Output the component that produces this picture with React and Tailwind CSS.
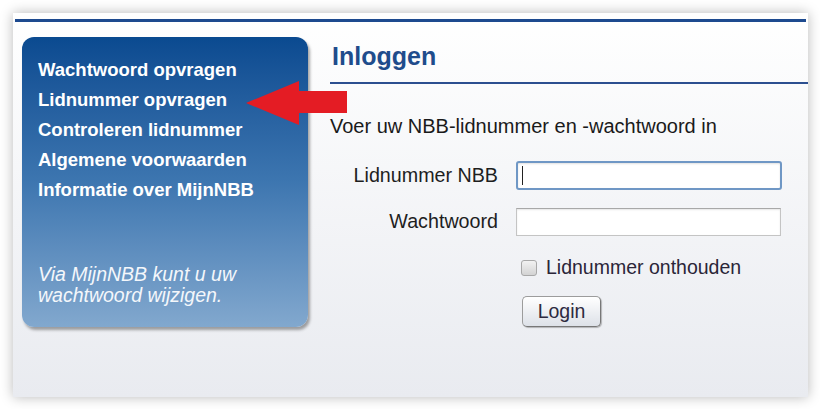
export default function App() {
  const font = { fontFamily: '"Liberation Sans", Arial, sans-serif' };
  return (
    <div className="relative w-[820px] h-[409px] bg-white overflow-hidden pt-[13px] pl-[13px]" style={font}>
      <div className="w-[795px] h-[384px] bg-gradient-to-b from-[#ffffff] to-[#e9ebf0] shadow-[0_0_12px_rgba(0,0,0,0.28)] flex flex-col">
        <div className="mt-[6px] mx-[2px] h-[3px] bg-[#1d4a8f]" />
        <div className="flex pt-[15px] pl-[9px]">
          <div className="w-[286px] h-[290px] rounded-[12px] bg-gradient-to-b from-[#0a4a90] via-[#3d76b0] to-[#82a8ce] shadow-[2px_3px_3px_rgba(0,0,0,0.35)] pt-[18px] pl-[16px] text-white">
            <ul className="font-bold text-[18.5px] leading-[30px]">
              <li>Wachtwoord opvragen</li>
              <li>Lidnummer opvragen</li>
              <li>Controleren lidnummer</li>
              <li>Algemene voorwaarden</li>
              <li>Informatie over MijnNBB</li>
            </ul>
            <p className="mt-[59px] italic text-[19.5px] leading-[21px] text-[#f4f7fb]">
              Via MijnNBB kunt u uw<br />wachtwoord wijzigen.
            </p>
          </div>
          <div className="flex-1 ml-[22px] pt-[4px]">
            <h1 className="text-[25px] leading-[30px] font-bold text-[#1f4c8c] pl-[2px] pb-[11px] border-b-2 border-[#2c4f90]">
              Inloggen
            </h1>
            <p className="mt-[30px] text-[20px] leading-[24px] text-[#1a1a1a]">
              Voer uw NBB-lidnummer en -wachtwoord in
            </p>
            <div className="mt-[23px] grid grid-cols-[168px_266px] gap-x-[18px] text-[19.7px] text-[#1e1e1e]">
              <div className="h-[29px] flex items-center justify-end">Lidnummer NBB</div>
              <div className="h-[29px] rounded-[3px] border-2 border-[#6f97c5] bg-white shadow-[inset_0_1px_2px_rgba(0,0,0,0.12)] flex items-center pl-[4px]">
                <span className="w-px h-[19px] bg-[#222]" />
              </div>
              <div className="mt-[18px] h-[28px] flex items-center justify-end">Wachtwoord</div>
              <div className="mt-[18px] h-[28px] w-[265px] border border-[#c4c4c4] border-t-[#a8a8a8] bg-white shadow-[inset_0_1px_2px_rgba(0,0,0,0.1)]" />
              <div />
              <div className="mt-[24px] h-[16px] flex items-center pl-[5px]">
                <span className="w-[16px] h-[16px] rounded-[3px] border border-[#a8a8a8] bg-gradient-to-b from-[#f2f2f2] to-[#d3d3d3]" />
                <span className="ml-[9px] text-[19.5px] text-[#2a2538]">Lidnummer onthouden</span>
              </div>
              <div />
              <div className="mt-[20px] pl-[6px]">
                <div className="w-[79px] h-[31px] rounded-[5px] border border-[#9c9c9c] border-r-[#777] border-b-[#777] bg-gradient-to-b from-[#ffffff] to-[#dde1e8] shadow-[1px_1px_1px_rgba(0,0,0,0.25)] flex items-center justify-center text-[19.5px] text-[#2d2a40]">
                  Login
                </div>
              </div>
            </div>
          </div>
        </div>
      </div>
      <svg className="absolute left-0 top-0" width="820" height="409" viewBox="0 0 820 409">
        <polygon points="246,103 299,81 299,91 347,91 347,113 299,113 299,125" fill="#e41c24" />
      </svg>
    </div>
  );
}
